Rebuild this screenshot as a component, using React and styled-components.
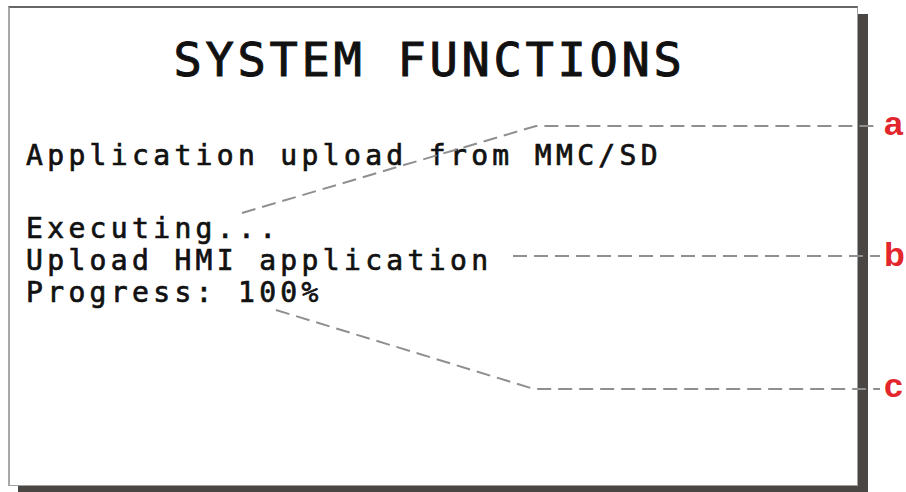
import React from 'react'
import styled, { createGlobalStyle } from 'styled-components'

const GlobalStyle = createGlobalStyle`
  html, body {
    margin: 0;
    padding: 0;
    background: #ffffff;
  }
  body {
    width: 906px;
    height: 492px;
    overflow: hidden;
  }
`;

const Page = styled.div`
  position: relative;
  display: flex;
  align-items: flex-start;
  width: 906px;
  height: 492px;
  padding: 6px 0 0 8px;
  box-sizing: border-box;
`;

const Frame = styled.section`
  width: 850px;
  height: 480px;
  flex: none;
  box-sizing: border-box;
  background: #ffffff;
  border-top: 2px solid #666666;
  border-left: 2px solid #a8a8a8;
  border-right: 1px solid #a0a0a0;
  border-bottom: 1px solid #a0a0a0;
  box-shadow: 10px 8px 0 #4a4643;
  padding: 27px 0 0 16px;
  font-family: "DejaVu Sans Mono", "Liberation Mono", monospace;
  color: #111111;
`;

const Title = styled.h1`
  margin: 0;
  padding-right: 24px;
  font-size: 47px;
  line-height: 50px;
  font-weight: normal;
  letter-spacing: 3.7px;
  text-align: center;
  white-space: pre;
  -webkit-text-stroke: 1px #111111;
`;

const Line = styled.div`
  font-size: 28px;
  line-height: 32px;
  letter-spacing: 4.34px;
  white-space: pre;
  margin-top: ${p => p.$gap || 0}px;
  -webkit-text-stroke: 0.7px #111111;
`;

const Labels = styled.div`
  display: flex;
  flex-direction: column;
  gap: 97px;
  margin: 100px 0 0 26px;
`;

const Label = styled.span`
  font-family: "Liberation Sans", Arial, sans-serif;
  font-size: 34px;
  line-height: 34px;
  font-weight: bold;
  color: #e2262b;
`;

const Callouts = styled.svg`
  position: absolute;
  left: 0;
  top: 0;
  pointer-events: none;
`;

const callouts = [
  '242,213 536,126 878,126',
  '513,256 880,256',
  '276,310 534,389 880,389',
];

export default function App() {
  return (
    <Page>
      <GlobalStyle />
      <Frame>
        <Title>SYSTEM FUNCTIONS</Title>
        <Line $gap={55}>Application upload from MMC/SD</Line>
        <Line $gap={41}>Executing...</Line>
        <Line>Upload HMI application</Line>
        <Line>Progress: 100%</Line>
      </Frame>
      <Labels>
        <Label>a</Label>
        <Label>b</Label>
        <Label>c</Label>
      </Labels>
      <Callouts width="906" height="492" viewBox="0 0 906 492">
        {callouts.map((pts, i) => (
          <polyline
            key={i}
            points={pts}
            fill="none"
            stroke="#8f8f8f"
            strokeWidth="2"
            strokeDasharray="14 7"
          />
        ))}
      </Callouts>
    </Page>
  )
}
